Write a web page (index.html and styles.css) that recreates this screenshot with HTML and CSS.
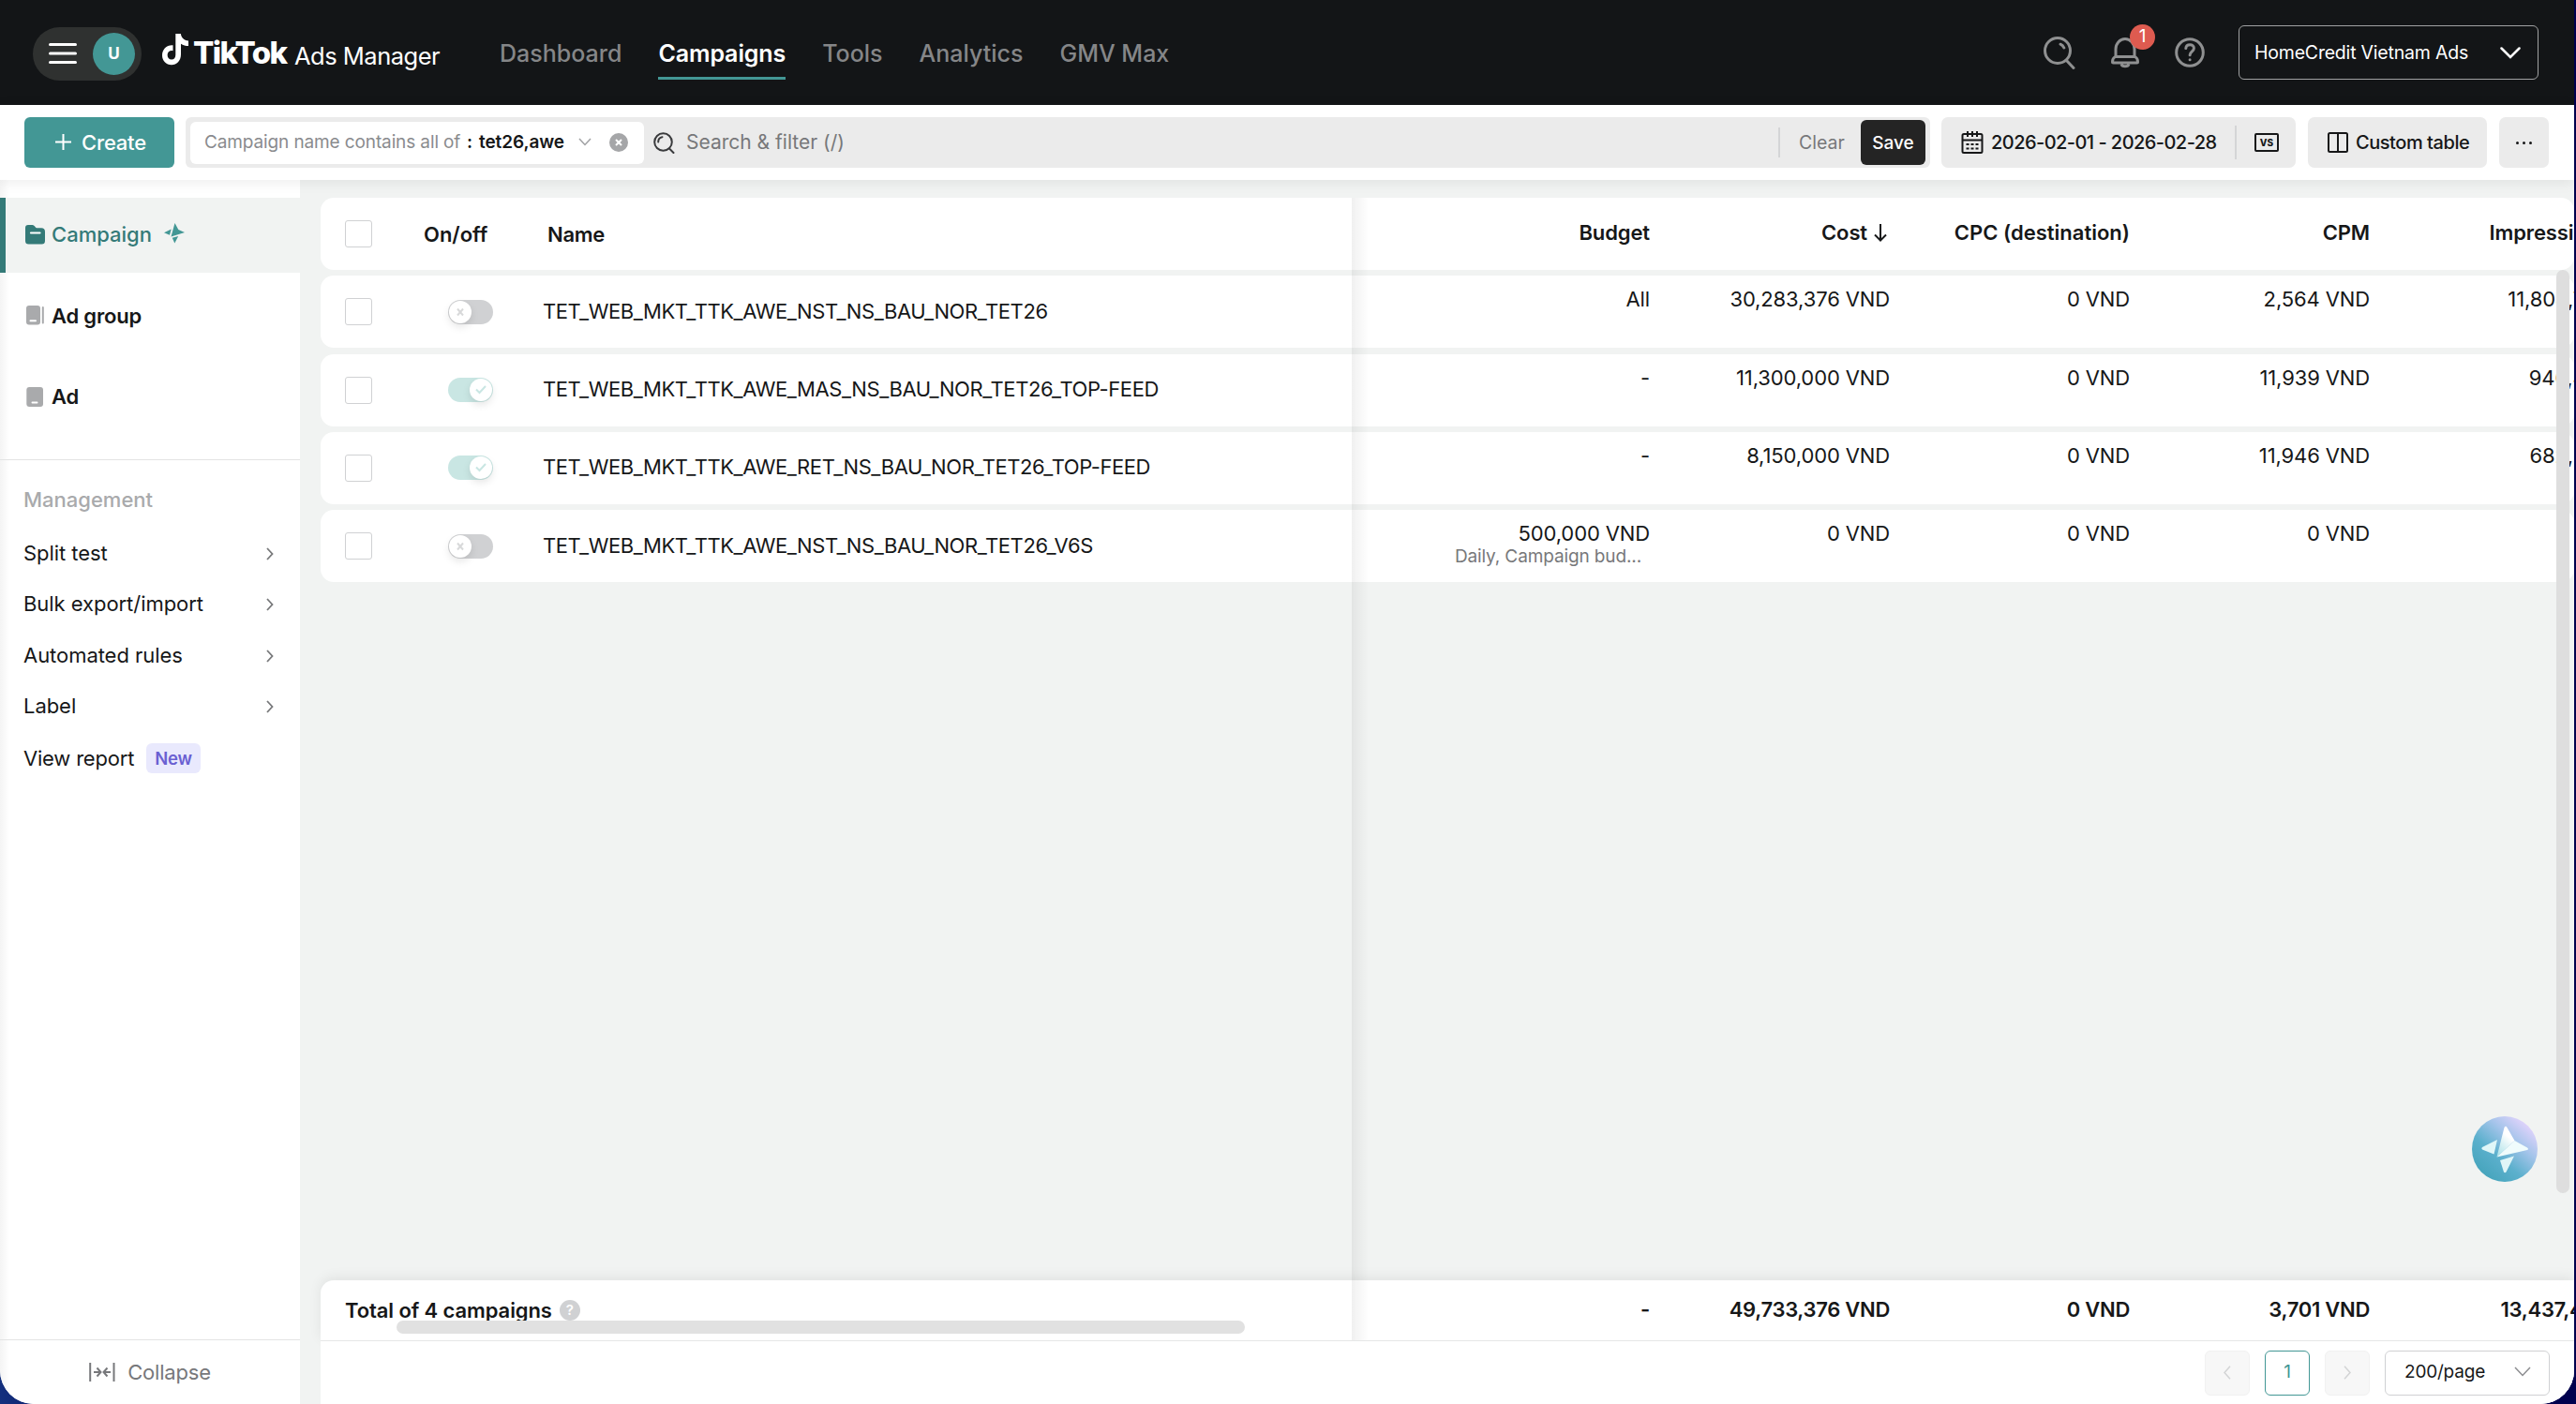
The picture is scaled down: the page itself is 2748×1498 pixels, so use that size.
FILE: index.html
```html
<!DOCTYPE html>
<html lang="en">
<head>
    <meta charset="UTF-8">
    <title>TikTok Ads Manager</title>
    <meta name="viewport" content="width=device-width, initial-scale=1.0">
    <link rel="stylesheet" href="styles.css">
</head>
<body>
<div class="window">
    <header class="topbar">
        <div class="menu-pill">
            <svg width="30" height="24" viewBox="0 0 30 24" fill="none" stroke="#fff" stroke-width="3" stroke-linecap="round"><path d="M1.5 2.5h27M1.5 12h27M1.5 21.5h27"/></svg>
            <span class="avatar">U</span>
        </div>
        <div class="brand">
            <svg class="note" width="28" height="34" viewBox="0 0 28 34"><path fill="#fff" d="M14.3 0h5.6c.4 4.200 3.200 7 8.100 7.400v5.700c-3 0-5.700-.8-8-2.300v11.200c0 6.900-4.500 11.300-10 11.300C4.200 33.300 0 28.900 0 23c0-6.500 5-11.300 11.500-10.700v5.900c-3.300-.7-5.900 1.500-5.900 4.600 0 2.800 2 4.800 4.400 4.800 2.700 0 4.300-2 4.300-5z"/></svg>
            <span class="brand-name">TikTok</span>
            <span class="brand-sub">Ads Manager</span>
        </div>
        <nav class="nav">
            <a>Dashboard</a>
            <a class="active">Campaigns</a>
            <a>Tools</a>
            <a>Analytics</a>
            <a>GMV Max</a>
        </nav>
        <div class="top-icons">
            <svg width="34" height="37" viewBox="0 0 34 37" fill="none" stroke="#8f9091" stroke-width="3" stroke-linecap="round"><circle cx="15" cy="16" r="13.500"/><path d="M24.500 26.500L32 34.500M18 9.200c1.800.8 3 2 3.800 3.800"/></svg>
            <div class="bell">
                <svg width="30" height="33" viewBox="0 0 30 33" fill="none" stroke="#8f9091" stroke-width="3" stroke-linejoin="round"><path d="M5 20V12.500a10 11 0 0 1 20 0V20M4.500 20.500h21c2 1 3 3 3 5.500a1 1 0 0 1-1 1h-25a1 1 0 0 1-1-1c0-2.500 1-4.500 3-5.500zM11 28.500c1 3 7 3 8 0"/></svg>
                <span class="badge">1</span>
            </div>
            <svg width="32" height="32" viewBox="0 0 32 32" fill="none" stroke="#8f9091" stroke-width="3" stroke-linecap="round"><circle cx="16" cy="16" r="14.300"/><path d="M11.800 11.600c.4-5 8.600-5 8.600 0 0 3.200-4.300 3.400-4.300 7.200M16.100 23.700v.1"/></svg>
        </div>
        <div class="account">
            <span>HomeCredit Vietnam Ads</span>
            <svg width="22" height="13" viewBox="0 0 22 13" fill="none" stroke="#fff" stroke-width="2.500" stroke-linecap="round"><path d="M1.500 1.500L11 11l9.500-9.500"/></svg>
        </div>
    </header>

    <div class="toolbar">
        <button class="create">
            <svg width="17" height="17" viewBox="0 0 17 17" stroke="#fff" stroke-width="2"><path d="M8.500 0v17M0 8.500h17"/></svg>
            <span>Create</span>
        </button>
        <div class="filter">
            <div class="chip">
                <span class="chip-key">Campaign name contains all of</span>
                <span class="chip-sep">:</span>
                <span class="chip-val">tet26,awe</span>
                <svg class="chip-arrow" width="14" height="9" viewBox="0 0 14 9" fill="none" stroke="#a0a1a3" stroke-width="1.500"><path d="M1 1l6 6.500L13 1"/></svg>
                <svg class="chip-x" width="20" height="20" viewBox="0 0 20 20"><circle cx="10" cy="10" r="10" fill="#a5a6a8"/><path d="M7 7l6 6M13 7l-6 6" stroke="#fff" stroke-width="2"/></svg>
            </div>
            <svg class="search-icon" width="23" height="23" viewBox="0 0 23 23" fill="none" stroke="#3a3b3d" stroke-width="2" stroke-linecap="round"><circle cx="10.500" cy="10.500" r="9.300"/><path d="M17 17.500l4.500 4.500M5.200 10.500c0-3 2-5 4.300-5.300" /></svg>
            <span class="search-text">Search &amp; filter (/)</span>
            <span class="divider"></span>
            <span class="clear">Clear</span>
            <button class="save">Save</button>
        </div>
        <div class="box date">
            <svg width="24" height="24" viewBox="0 0 24 24" fill="none" stroke="#161718" stroke-width="2"><rect x="1.500" y="3" width="21" height="20" rx="1.500"/><path d="M1.500 9.500h21M7 0v6M12 0v6M17 0v6M5.500 14h3M10.500 14h3M15.500 14h3M5.500 18.500h3M10.500 18.500h3M15.500 18.500h3"/></svg>
            <span class="date-text">2026-02-01 - 2026-02-28</span>
            <span class="divider tall"></span>
            <span class="vs">VS</span>
        </div>
        <div class="box custom">
            <svg width="22" height="22" viewBox="0 0 22 22" fill="none" stroke="#161718" stroke-width="2"><rect x="1" y="1" width="20" height="20" rx="1.500"/><path d="M11 1v20"/></svg>
            <span>Custom table</span>
        </div>
        <div class="box more"><i></i><i></i><i></i></div>
    </div>

    <div class="body">
        <aside class="sidebar">
            <div class="level active">
                <svg width="21" height="21" viewBox="0 0 21 21"><path fill="#347a78" d="M0 3a3 3 0 0 1 3-3h4.500c1.500 0 2.200 1 3 2 .6.900 1.200 1.200 2.300 1.200H17a4 4 0 0 1 4 4V17a3.500 3.500 0 0 1-3.500 3.500h-14A3.500 3.500 0 0 1 0 17z"/><path d="M6 8.500h9.500" stroke="#fff" stroke-width="2.200" stroke-linecap="round"/></svg>
                <span>Campaign</span>
                <svg class="spark" width="22" height="22" viewBox="0 0 22 22" fill="#439795"><path d="M11.500 0l3.800 7L22 10 7.500 14.500zM0 10.200l7.700-3.800-1.700 6.300zM8.800 15.800l6.400-1.800L11.300 21.500z"/></svg>
            </div>
            <div class="level">
                <svg width="21" height="21" viewBox="0 0 21 21"><rect x="1" width="15" height="20.500" rx="3" fill="#a9aaac"/><rect x="17.800" y="1" width="2" height="18.500" rx="1" fill="#a9aaac"/><path d="M5.500 16.200h5.500" stroke="#fff" stroke-width="2" stroke-linecap="round"/></svg>
                <span>Ad group</span>
            </div>
            <div class="level">
                <svg width="21" height="21" viewBox="0 0 21 21"><rect x="1.300" width="17.700" height="21" rx="3" fill="#a9aaac"/><path d="M7.500 16.500h5" stroke="#fff" stroke-width="2" stroke-linecap="round"/></svg>
                <span>Ad</span>
            </div>
            <div class="management">
                <h4>Management</h4>
                <div class="link"><span>Split test</span><svg class="arrow" width="8" height="14" viewBox="0 0 8 14"><path d="M1 1l5.500 6L1 13"/></svg></div>
                <div class="link"><span>Bulk export/import</span><svg class="arrow" width="8" height="14" viewBox="0 0 8 14"><path d="M1 1l5.500 6L1 13"/></svg></div>
                <div class="link"><span>Automated rules</span><svg class="arrow" width="8" height="14" viewBox="0 0 8 14"><path d="M1 1l5.500 6L1 13"/></svg></div>
                <div class="link"><span>Label</span><svg class="arrow" width="8" height="14" viewBox="0 0 8 14"><path d="M1 1l5.500 6L1 13"/></svg></div>
                <div class="link report"><span>View report</span><em class="new">New</em></div>
            </div>
            <div class="collapse">
                <svg width="28" height="20" viewBox="0 0 28 20" fill="none" stroke="#77787b" stroke-width="2"><path d="M1.200 0v20M26.500 0v20M5 10h7M8.500 5.500l4 4.500-4 4.500M23 10h-7M19.500 5.500l-4 4.500 4 4.500"/></svg>
                <span>Collapse</span>
            </div>
        </aside>

        <main class="main">
            <div class="rows">
                <div class="row head">
                    <div class="fixed"><span class="check"></span><span class="onoff">On/off</span><span class="name">Name</span></div>
                    <div class="cell budget">Budget</div>
                    <div class="cell cost">Cost <svg width="14" height="19" viewBox="0 0 14 19" fill="none" stroke="#161718" stroke-width="2"><path d="M7 0v17.500M1 11.500l6 6 6-6"/></svg></div>
                    <div class="cell cpc">CPC (destination)</div>
                    <div class="cell">CPM</div>
                    <div class="cell">Impressions</div>
                </div>
                <div class="row">
                    <div class="fixed"><span class="check"></span><span class="toggle"><b><svg width="10" height="10" viewBox="0 0 10 10"><path d="M2 1.500l6 7M8 1.500l-6 7"/></svg></b></span><span class="name">TET_WEB_MKT_TTK_AWE_NST_NS_BAU_NOR_TET26</span></div>
                    <div class="cell budget">All</div>
                    <div class="cell">30,283,376 VND</div>
                    <div class="cell">0 VND</div>
                    <div class="cell">2,564 VND</div>
                    <div class="cell">11,808,729</div>
                </div>
                <div class="row">
                    <div class="fixed"><span class="check"></span><span class="toggle on"><b><svg width="12" height="10" viewBox="0 0 12 10"><path d="M1 4.500L4.500 8 11 1"/></svg></b></span><span class="name">TET_WEB_MKT_TTK_AWE_MAS_NS_BAU_NOR_TET26_TOP-FEED</span></div>
                    <div class="cell budget">-</div>
                    <div class="cell">11,300,000 VND</div>
                    <div class="cell">0 VND</div>
                    <div class="cell">11,939 VND</div>
                    <div class="cell">946,478</div>
                </div>
                <div class="row">
                    <div class="fixed"><span class="check"></span><span class="toggle on"><b><svg width="12" height="10" viewBox="0 0 12 10"><path d="M1 4.500L4.500 8 11 1"/></svg></b></span><span class="name">TET_WEB_MKT_TTK_AWE_RET_NS_BAU_NOR_TET26_TOP-FEED</span></div>
                    <div class="cell budget">-</div>
                    <div class="cell">8,150,000 VND</div>
                    <div class="cell">0 VND</div>
                    <div class="cell">11,946 VND</div>
                    <div class="cell">682,237</div>
                </div>
                <div class="row">
                    <div class="fixed"><span class="check"></span><span class="toggle"><b><svg width="10" height="10" viewBox="0 0 10 10"><path d="M2 1.500l6 7M8 1.500l-6 7"/></svg></b></span><span class="name">TET_WEB_MKT_TTK_AWE_NST_NS_BAU_NOR_TET26_V6S</span></div>
                    <div class="cell budget">500,000 VND<small>Daily, Campaign bud...</small></div>
                    <div class="cell">0 VND</div>
                    <div class="cell">0 VND</div>
                    <div class="cell">0 VND</div>
                </div>
            </div>
            <div class="total">
                <div class="fixed"><span class="total-text">Total of 4 campaigns</span><span class="help">?</span></div>
                <div class="cell budget">-</div>
                <div class="cell">49,733,376 VND</div>
                <div class="cell">0 VND</div>
                <div class="cell">3,701 VND</div>
                <div class="cell">13,437,444</div>
            </div>
            <div class="pager">
                <span class="pg off"><svg width="8" height="15" viewBox="0 0 8 15"><path d="M7 .8L1 7.500l6 6.700"/></svg></span>
                <span class="pg current">1</span>
                <span class="pg off"><svg width="8" height="15" viewBox="0 0 8 15"><path d="M1 .8l6 6.700-6 6.700"/></svg></span>
                <span class="size"><span>200/page</span><svg width="18" height="11" viewBox="0 0 18 11" fill="none" stroke="#8c8d90" stroke-width="1.500"><path d="M1 1l8 8.500L17 1"/></svg></span>
            </div>
            <div class="fixed-shadow"></div>
            <div class="hscroll"></div>
            <div class="vscroll"></div>
            <div class="assistant">
                <svg width="70" height="70" viewBox="0 0 70 70">
                    <defs>
                        <linearGradient id="ball" x1="0.200" y1="0.900" x2="0.850" y2="0.150">
                            <stop offset="0" stop-color="#47a5bd"/>
                            <stop offset="0.350" stop-color="#5cb0cd"/>
                            <stop offset="0.700" stop-color="#a4c4ea"/>
                            <stop offset="1" stop-color="#dcd2fa"/>
                        </linearGradient>
                        <linearGradient id="wing" x1="0" y1="1" x2="0.500" y2="0">
                            <stop offset="0" stop-color="#a6dfe6"/>
                            <stop offset="0.800" stop-color="#fff"/>
                        </linearGradient>
                    </defs>
                    <circle cx="35" cy="35" r="35" fill="url(#ball)"/>
                    <path d="M26.500 43.500L34.500 12q1.500-2.500 3 0l8 14z" fill="url(#wing)"/>
                    <path d="M26.500 43.500l19-17.500 13.500 7.500q2 1.500 0 2.500z" fill="#f0fcfc"/>
                    <path d="M11 33l16-8-3.500 15.500L11 35.500q-1.500-1.300 0-2.500z" fill="#e0f6f8"/>
                    <path d="M30 47l15-4.500-8.500 17q-1.500 1.500-2.500 0z" fill="#e0f6f8"/>
                </svg>
            </div>
        </main>
    </div>
</div>
</body>
</html>
```
FILE: styles.css
```css
* {
    box-sizing: border-box;
}
body {
    margin: 0;
    height: 1498px;
    overflow: hidden;
    background: linear-gradient(90deg, #14307e 0, #0c1c6a 60px, #00004e 2600px);
    font-family: Inter, "Noto Sans", sans-serif;
    font-size: 22px;
    color: #161718;
}
svg {
    display: block;
    flex: none;
}
span, a {
    white-space: nowrap;
}
button {
    border: 0;
    padding: 0;
    font: inherit;
}
.window {
    display: flex;
    flex-direction: column;
    width: 2746px;
    height: 1498px;
    overflow: hidden;
    background: #fff;
    border-radius: 0 0 36px 36px;
}

/* top bar */
.topbar {
    display: flex;
    align-items: center;
    flex: none;
    height: 112px;
    padding: 0 38px 0 35px;
    background: #131517;
    color: #fff;
}
.menu-pill {
    display: flex;
    align-items: center;
    justify-content: space-between;
    width: 116px;
    height: 57px;
    padding: 0 7px 0 17px;
    border-radius: 29px;
    background: #2f3130;
    margin-top: 2px;
}
.avatar {
    width: 45px;
    height: 45px;
    border-radius: 50%;
    background: #439795;
    text-align: center;
    font-size: 17px;
    font-weight: 700;
    line-height: 45px;
}
.brand {
    display: flex;
    align-items: center;
    margin-left: 22px;
    width: 360px;
}
.note {
    margin-top: -7px;
}
.brand-name {
    margin-left: 5px;
    width: 108px;
    font-size: 33px;
    font-weight: 800;
    letter-spacing: -1.6px;
    margin-top: -1px;
}
.brand-sub {
    font-size: 25.500px;
    letter-spacing: -0.5px;
    margin-top: 6px;
}
.nav {
    display: flex;
    gap: 39px;
    font-size: 25px;
    font-weight: 500;
    color: #858688;
}
.nav a {
    height: 56px;
    line-height: 57px;
    margin-top: 1px;
    border-bottom: 3px solid transparent;
}
.nav .active {
    color: #fff;
    border-color: #439795;
    font-weight: 600;
    letter-spacing: -0.1px;
}
.top-icons {
    display: flex;
    align-items: center;
    gap: 38px;
    margin-left: auto;
    margin-right: 36px;
}
.bell {
    position: relative;
}
.badge {
    position: absolute;
    left: 20px;
    top: -14px;
    width: 27px;
    height: 27px;
    border-radius: 50%;
    background: #de5b50;
    font-size: 19px;
    line-height: 26px;
    text-align: center;
}
.account {
    display: flex;
    align-items: center;
    justify-content: space-between;
    width: 320px;
    height: 58px;
    padding: 0 18px 0 16px;
    border: 1.500px solid #a1a2a3;
    border-radius: 6px;
    font-size: 19.500px;
    letter-spacing: -0.2px;
}

/* toolbar */
.toolbar {
    display: flex;
    align-items: center;
    flex: none;
    position: relative;
    z-index: 2;
    height: 80px;
    padding: 0 27px 0 26px;
    background: #fff;
    box-shadow: 0 2px 14px rgba(0, 0, 0, 0.08);
}
.create {
    display: flex;
    align-items: center;
    justify-content: center;
    gap: 11px;
    width: 160px;
    height: 54px;
    padding: 0 0 1px 3px;
    border-radius: 6px;
    background: #439795;
    color: #fff;
    font-weight: 500;
    letter-spacing: -0.2px;
}
.filter {
    display: flex;
    align-items: center;
    flex: none;
    width: 1861px;
    height: 54px;
    margin-left: 12px;
    padding: 0 5px;
    border-radius: 6px;
    background: #ebebeb;
    font-size: 20px;
}
.chip {
    display: flex;
    align-items: center;
    width: 484px;
    height: 45px;
    padding: 0 0 1px 15px;
    border-radius: 6px;
    background: #fff;
}
.chip-key {
    width: 280px;
    color: #8a8b8e;
    font-size: 19px;
    letter-spacing: -0.12px;
}
.chip-sep, .chip-val {
    font-size: 19px;
    font-weight: 600;
}
.chip-val {
    width: 94px;
    margin-left: 7px;
    letter-spacing: -0.1px;
}
.chip-arrow {
    margin-left: 12px;
}
.chip-x {
    margin-left: 19px;
}
.search-icon {
    margin-left: 10px;
}
.search-text {
    margin-left: 12px;
    margin-right: auto;
    padding-bottom: 1px;
    color: #77787a;
    font-size: 21px;
}
.divider {
    flex: none;
    width: 2px;
    height: 32px;
    background: #d4d5d6;
}
.clear {
    width: 86px;
    padding: 0 0 1px 20px;
    color: #77787a;
    font-size: 19.500px;
}
.save {
    width: 69px;
    height: 48px;
    border-radius: 6px;
    background: #242424;
    color: #fff;
    font-size: 19px;
    font-weight: 500;
}
.box {
    display: flex;
    align-items: center;
    flex: none;
    height: 54px;
    border-radius: 7px;
    background: #ebebeb;
    font-size: 20px;
    font-weight: 500;
}
.date {
    width: 378px;
    margin-left: 12px;
    padding-left: 21px;
}
.date-text {
    flex: none;
    width: 268px;
    padding: 0 0 1px 8px;
    letter-spacing: -0.55px;
}
.tall {
    height: 36px;
}
.vs {
    margin-left: 19px;
    width: 26px;
    height: 20px;
    border: 2px solid #161718;
    border-radius: 2px;
    font-size: 10px;
    font-weight: 800;
    line-height: 16px;
    text-align: center;
}
.custom {
    width: 191px;
    margin-left: 13px;
    padding: 0 0 1px 21px;
    gap: 8px;
    letter-spacing: -0.45px;
}
.more {
    width: 53px;
    margin-left: 13px;
    justify-content: center;
    gap: 4px;
}
.more i {
    width: 3px;
    height: 3px;
    border-radius: 50%;
    background: #161718;
}

/* sidebar */
.body {
    display: flex;
    flex: 1;
    min-height: 0;
}
.sidebar {
    display: flex;
    flex-direction: column;
    flex: none;
    width: 320px;
    padding-top: 19px;
    background: linear-gradient(90deg, #f4f4f4, #fff 10px);
}
.level {
    display: flex;
    align-items: center;
    height: 80px;
    margin-bottom: 6.500px;
    padding: 0 0 2px 27px;
    gap: 7px;
    font-weight: 600;
    letter-spacing: -0.2px;
}
.level.active {
    padding-left: 21px;
    border-left: 6px solid #347a78;
    background: #f1f3f2;
    color: #347a78;
    font-weight: 500;
    letter-spacing: 0;
}
.spark {
    margin-left: 6px;
    margin-top: -2px;
}
.management {
    flex: 1;
    margin-top: 19px;
    border-top: 1px solid #e3e4e4;
    padding: 27px 28px 0 25px;
}
.management h4 {
    margin: 0 0 15px;
    height: 30px;
    line-height: 30px;
    color: #a9aaac;
    font-size: 22px;
    font-weight: 500;
}
.link {
    display: flex;
    align-items: center;
    justify-content: space-between;
    height: 54.500px;
    letter-spacing: -0.05px;
}
.report {
    padding-top: 3px;
    letter-spacing: -0.2px;
}
.arrow {
    fill: none;
    stroke: #77787a;
    stroke-width: 1.800;
    margin-top: 2px;
}
.new {
    margin-right: auto;
    margin-left: 13px;
    padding: 0 9px;
    height: 32px;
    line-height: 32px;
    border-radius: 6px;
    background: #e9e9fd;
    color: #6a60d2;
    font-size: 18.500px;
    font-style: normal;
    font-weight: 600;
}
.collapse {
    display: flex;
    align-items: center;
    justify-content: center;
    gap: 13px;
    height: 69px;
    border-top: 1px solid #e3e4e4;
    color: #77787b;
    letter-spacing: -0.2px;
}

/* table */
.main {
    display: flex;
    flex-direction: column;
    flex: 1;
    min-width: 0;
    position: relative;
    padding: 19px 0 0 22px;
    background: #f1f3f2;
    overflow: hidden;
}
.rows {
    display: flex;
    flex-direction: column;
    gap: 6.300px;
    flex: 1;
}
.row {
    display: flex;
    flex: none;
    height: 77px;
    border-radius: 14px;
    background: #fff;
}
.fixed {
    display: flex;
    align-items: center;
    flex: none;
    width: 1100px;
    padding-left: 26px;
}
.check {
    width: 29px;
    height: 29px;
    border: 1.500px solid #d0d1d3;
    border-radius: 3px;
}
.onoff {
    width: 132px;
    margin-left: 55px;
}
.name {
    padding-bottom: 2px;
    letter-spacing: -0.43px;
}
.toggle {
    width: 48px;
    height: 26px;
    margin: 0 53px 0 81px;
    border-radius: 13px;
    background: #d0d1d3;
    padding: 1px;
}
.toggle b {
    display: flex;
    align-items: center;
    justify-content: center;
    width: 24px;
    height: 24px;
    border-radius: 50%;
    background: #fff;
    box-shadow: 0 4px 8px rgba(0, 0, 0, 0.1);
}
.toggle svg {
    fill: none;
    stroke: #d8d9da;
    stroke-width: 2;
}
.toggle.on {
    background: #c9e6e3;
}
.toggle.on b {
    margin-left: 22px;
}
.toggle.on svg {
    stroke: #c9e6e3;
}
.cell {
    flex: none;
    width: 256px;
    padding: 11px 16px 0 0;
    line-height: 28px;
    text-align: right;
    white-space: nowrap;
    letter-spacing: -0.12px;
}
.cell.budget {
    width: 334px;
}
.cell small {
    display: block;
    margin: -2px 9px 0 0;
    color: #77787a;
    font-size: 19px;
    line-height: 26px;
}
.head {
    font-weight: 600;
}
.head .name {
    padding: 0;
    letter-spacing: -0.3px;
}
.head .cell {
    padding-top: 23px;
}
.head .cell.cpc {
    letter-spacing: 0;
}
.head .cost {
    display: flex;
    justify-content: flex-end;
    align-items: flex-start;
    gap: 7px;
}
.cost svg {
    margin-top: 5px;
    margin-right: 3px;
}
.total {
    display: flex;
    flex: none;
    height: 65px;
    border-bottom: 1px solid #e6e7e7;
    border-radius: 14px 0 0 0;
    background: #fff;
    font-weight: 600;
    box-shadow: 0 -3px 14px rgba(0, 0, 0, 0.07);
}
.total .fixed {
    padding-bottom: 1px;
    letter-spacing: -0.1px;
}
.total .cell {
    padding-top: 17px;
    letter-spacing: -0.3px;
}
.help {
    width: 22px;
    height: 22px;
    margin-left: 8px;
    border-radius: 50%;
    background: #d0d1d3;
    color: #fff;
    font-size: 15px;
    line-height: 22px;
    text-align: center;
}
.pager {
    display: flex;
    align-items: center;
    justify-content: flex-end;
    flex: none;
    height: 67px;
    padding-right: 26px;
    gap: 16px;
    background: #fff;
    font-size: 19px;
}
.pg {
    display: flex;
    align-items: center;
    justify-content: center;
    width: 48px;
    height: 48px;
    border-radius: 6px;
}
.off {
    border: 1px solid #f1f1f1;
    background: #f7f7f7;
}
.off svg {
    fill: none;
    stroke: #d3d4d5;
    stroke-width: 1.500;
}
.current {
    border: 1.500px solid #439795;
    padding-bottom: 2px;
    color: #439795;
}
.size {
    display: flex;
    align-items: center;
    justify-content: space-between;
    width: 176px;
    height: 48px;
    padding: 0 19px 2px 20px;
    border: 1.500px solid #d0d1d3;
    border-radius: 6px;
    letter-spacing: -0.2px;
}

/* layers over the table */
.fixed-shadow {
    position: absolute;
    left: 1122px;
    top: 19px;
    bottom: 68px;
    width: 18px;
    background: linear-gradient(90deg, rgba(0, 0, 0, 0.06), rgba(0, 0, 0, 0));
}
.hscroll {
    position: absolute;
    left: 103px;
    bottom: 75px;
    width: 905px;
    height: 14px;
    border-radius: 7px;
    background: #e1e1e1;
}
.vscroll {
    position: absolute;
    right: 5px;
    top: 96px;
    width: 14px;
    height: 985px;
    border-radius: 7px;
    background: #dedede;
}
.assistant {
    position: absolute;
    right: 39px;
    bottom: 237px;
}
```
